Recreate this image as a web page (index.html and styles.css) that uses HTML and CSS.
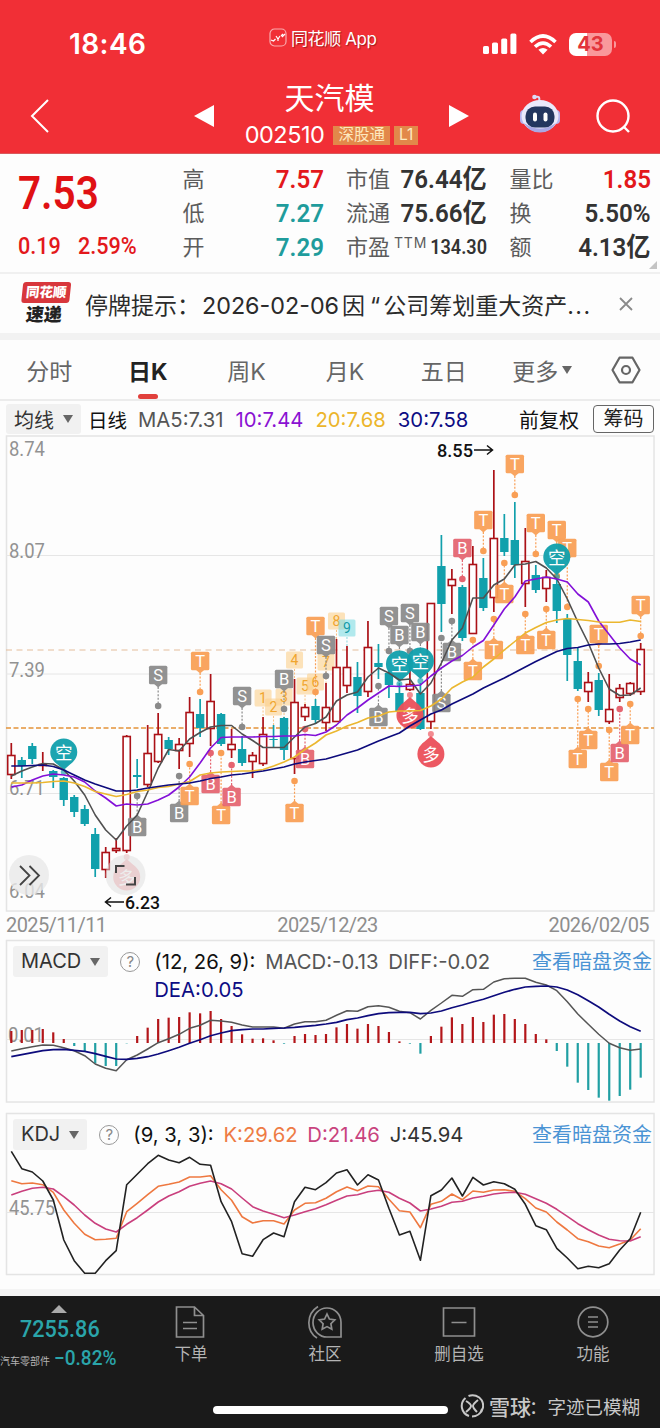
FILE: index.html
```html
<!DOCTYPE html>
<html lang="zh-CN">

<head>
  <meta charset="UTF-8">
  <meta name="viewport" content="width=device-width, initial-scale=1.0">
  <title>天汽模 002510</title>
  <link rel="stylesheet" href="styles.css">
</head>

<body>
  <header class="top">
    <div class="status-bar">
      <div class="clock">18:46</div>
      <div class="app-name">
        <svg width="18" height="19" viewBox="0 0 18 19" fill="none" stroke="#fff" stroke-width="1.2">
          <rect x="1" y="1" width="16" height="17" rx="4.5" stroke-opacity=".6" />
          <path d="M2 12l2.5 1 2-2M7 8l2 3 2-3M9 11v2M12 8l2-2M13 9l3-3" />
        </svg>
        <span>同花顺 App</span>
      </div>
      <div class="signals">
        <svg width="34" height="22" viewBox="0 0 34 22" fill="#fff">
          <rect x="0" y="13" width="6" height="8" rx="1.6" />
          <rect x="9" y="9.5" width="6" height="11.5" rx="1.6" />
          <rect x="18.2" y="5.5" width="6" height="15.5" rx="1.6" />
          <rect x="27.4" y="0.5" width="6" height="20.5" rx="1.6" />
        </svg>
        <svg width="28" height="21" viewBox="0 0 28 21" fill="none" stroke="#fff" stroke-width="3.6">
          <path d="M1.5 8Q14-4 26.500 8" />
          <path d="M6 12.800Q14 5.400 22 12.800" />
          <path d="M14 20.500l-4.600-4.700Q14 12 18.600 15.800z" fill="#fff" stroke="none" />
        </svg>
        <div class="battery"><span>43</span></div>
      </div>
    </div>
    <div class="nav">
      <svg class="back" width="20" height="36" viewBox="0 0 20 36" fill="none" stroke="#fff" stroke-width="2">
        <path d="M18 2L2 18l16 16" />
      </svg>
      <div class="stock">
        <svg width="20" height="22" viewBox="0 0 20 22"><path d="M20 0v22L0 11z" fill="#fff" /></svg>
        <div class="stock-title">
          <div class="stock-name">天汽模</div>
          <div class="stock-code"><span>002510</span><i>深股通</i><i>L1</i></div>
        </div>
        <svg width="20" height="22" viewBox="0 0 20 22"><path d="M0 0v22L20 11z" fill="#fff" /></svg>
      </div>
      <svg class="robot" width="42" height="40" viewBox="0 0 42 40">
        <path d="M20 8c1-5 0-6-4-5" fill="none" stroke="#dcd9f5" stroke-width="2" />
        <circle cx="15.500" cy="3" r="2.300" fill="#dcd9f5" />
        <rect x="1" y="16" width="8" height="14" rx="4" fill="#b6b4ee" />
        <rect x="33" y="16" width="8" height="14" rx="4" fill="#b6b4ee" />
        <ellipse cx="21" cy="22" rx="18.500" ry="16" fill="#eae9fb" />
        <path d="M5 29q16 11 32 0-5 9.500-16 9.500T5 29z" fill="#a9a8e4" />
        <rect x="6.500" y="12.500" width="29" height="21" rx="9.500" fill="#23365f" />
        <rect x="14" y="18.500" width="4" height="9" rx="2" fill="#fff" />
        <rect x="24.500" y="18.500" width="4" height="9" rx="2" fill="#fff" />
      </svg>
      <svg class="search" width="34" height="36" viewBox="0 0 34 36" fill="none" stroke="#fff" stroke-width="2.4">
        <circle cx="17" cy="17" r="15.500" />
        <path d="M27.500 27.500l5.500 5.500" />
      </svg>
    </div>
  </header>

  <section class="quote">
    <div class="price">
      <div class="price-now din">7.53</div>
      <div class="price-change"><span class="din">0.19</span><span class="din">2.59%</span></div>
    </div>
    <dl class="stats">
      <div><dt>高</dt><dd class="din up">7.57</dd></div>
      <div><dt>低</dt><dd class="din down">7.27</dd></div>
      <div><dt>开</dt><dd class="din down">7.29</dd></div>
    </dl>
    <dl class="stats">
      <div><dt>市值</dt><dd class="din">76.44亿</dd></div>
      <div><dt>流通</dt><dd class="din">75.66亿</dd></div>
      <div><dt>市盈<sup>TTM</sup></dt><dd class="din small">134.30</dd></div>
    </dl>
    <dl class="stats">
      <div><dt>量比</dt><dd class="din up">1.85</dd></div>
      <div><dt>换</dt><dd class="din">5.50%</dd></div>
      <div><dt>额</dt><dd class="din">4.13亿</dd></div>
    </dl>
    <span class="corner"></span>
  </section>

  <section class="news">
    <div class="news-logo"><b>同花顺</b><em>速递</em></div>
    <div class="news-text">停牌提示：<span class="date">2026-02-06</span>因<q>“</q>公司筹划重大资产<span class="more">...</span></div>
    <svg width="14" height="14" viewBox="0 0 14 14" stroke="#8a8a8a" stroke-width="1.8"><path d="M1 1l12 12M13 1L1 13" /></svg>
  </section>

  <nav class="tabs">
    <div>分时</div>
    <div class="active">日K</div>
    <div>周K</div>
    <div>月K</div>
    <div>五日</div>
    <div>更多<i class="caret"></i></div>
    <div>
      <svg width="30" height="28" viewBox="0 0 30 28" fill="none" stroke="#666" stroke-width="2.2">
        <path d="M8.500 1.700h13L28.500 14l-7 12.300h-13L1.500 14z" stroke-linejoin="round" />
        <circle cx="15" cy="14" r="4" />
      </svg>
    </div>
  </nav>

  <div class="ma-bar">
    <div class="picker">均线<i class="caret"></i></div>
    <span class="ma-name">日线</span>
    <span class="ma5">MA5:7.31</span>
    <span class="ma10">10:7.44</span>
    <span class="ma20">20:7.68</span>
    <span class="ma30">30:7.58</span>
    <span class="adjust">前复权</span>
    <span class="chips">筹码</span>
  </div>

  <svg id="kline" class="chart" width="660" height="477" viewBox="0 435 660 477"></svg>
  <div class="dates"><span>2025/11/11</span><span>2025/12/23</span><span>2026/02/05</span></div>

  <section class="panel">
    <div class="panel-head">
      <div class="picker">MACD<i class="caret"></i></div>
      <span class="help">?</span>
      <p class="macd-values">
        <span class="black">(12, 26, 9):</span> <span>MACD:-0.13</span> <span>DIFF:-0.02</span> <span class="ma30">DEA:0.05</span>
      </p>
      <a>查看暗盘资金</a>
    </div>
    <svg id="macd" class="chart" width="660" height="163" viewBox="0 940 660 163"></svg>
  </section>

  <section class="panel">
    <div class="panel-head">
      <div class="picker">KDJ<i class="caret"></i></div>
      <span class="help">?</span>
      <p class="kdj-values">
        <span class="black">(9, 3, 3):</span> <span class="k">K:29.62</span> <span class="d">D:21.46</span> <span class="j">J:45.94</span>
      </p>
      <a>查看暗盘资金</a>
    </div>
    <svg id="kdj" class="chart" width="660" height="163" viewBox="0 1113 660 163"></svg>
  </section>

  <footer class="bottom">
    <div class="index">
      <i class="caret-up"></i>
      <div class="din index-value">7255.86</div>
      <div class="index-change"><small>汽车零部件</small><span class="din">−0.82%</span></div>
    </div>
    <div class="item">
      <svg width="34" height="34" viewBox="0 0 34 34"><path d="M2.500 2h18l9 8.500V32h-27zM20.500 2v8.500h9M9 17.500h14M9 23.500h14" /></svg>
      下单
    </div>
    <div class="item">
      <svg width="34" height="34" viewBox="0 0 34 34">
        <path d="M33 32H19.500a14 14.500 0 1 1 13.500-14.500zM10 1.500C-2 9-2 26 9 33" />
        <path d="M19 9l2.400 5 5.400.8-3.900 3.900.9 5.500-4.800-2.600-4.800 2.600.9-5.500-3.900-3.900 5.400-.8z" />
      </svg>
      社区
    </div>
    <div class="item">
      <svg width="34" height="34" viewBox="0 0 34 34"><path d="M1.500 3h31v28h-31zM9.500 17.500h15" /></svg>
      删自选
    </div>
    <div class="item">
      <svg width="34" height="34" viewBox="0 0 34 34"><circle cx="17" cy="17" r="14.800" /><path d="M12 12h10M12 17h10M12 22h10" /></svg>
      功能
    </div>
    <span class="home-bar"></span>
    <div class="watermark">
      <svg width="24" height="24" viewBox="0 0 24 24" fill="none" stroke="#c8c8c8" stroke-width="2">
        <path d="M9 22A10.500 10.500 0 0 1 5.500 4M8.500 2A10.500 10.500 0 0 1 19 20M22 15A10.500 10.500 0 0 1 12 22.500" />
        <path d="M6 7q5 3 5 5t-5 6M18 6q-5 4-5 6t4 6" />
      </svg>
      <b>雪球</b><span>：字迹已模糊</span>
    </div>
  </footer>

  <script src="chart.js"></script>
</body>

</html>
```

FILE: styles.css
```css
* {
  margin: 0;
  padding: 0;
  box-sizing: border-box;
}

body {
  width: 660px;
  font-family: 'Inter', 'Noto Sans CJK SC', sans-serif;
  background: #fdfdfd;
  color: #333;
  overflow-x: hidden;
}

i, em {
  font-style: normal;
}

svg {
  display: block;
  flex: none;
}

.din {
  font-family: 'Roboto', 'Noto Sans CJK SC', sans-serif;
  font-weight: 600;
  display: inline-block;
  transform: scaleX(.89);
  transform-origin: left;
  white-space: nowrap;
}

.up {
  color: #e3181b;
}

.down {
  color: #1f9c9c;
}

/* header */
.top {
  height: 154px;
  background: #f12f36;
  border-bottom: 1px solid #d9595c;
  color: #fff;
}

.status-bar {
  height: 74px;
  padding: 14px 45px 0 69px;
  display: grid;
  grid-template-columns: 190px 1fr 132px;
  align-items: center;
}

.clock {
  font-size: 28px;
  font-weight: 600;
  letter-spacing: .4px;
}

.app-name {
  display: flex;
  align-items: center;
  gap: 4px;
  padding: 0 0 14px 10px;
  font-size: 17px;
  letter-spacing: -.4px;
  text-shadow: 1px 1px 1px rgba(90, 0, 0, .5);
}

.signals {
  display: flex;
  align-items: center;
  gap: 12px;
}

.battery {
  position: relative;
  width: 43px;
  height: 23px;
  border-radius: 7px;
  background: linear-gradient(90deg, #fff 43%, #f9989b 43%);
  color: #e2343b;
  font-size: 20px;
  font-weight: 700;
  line-height: 23px;
  text-align: center;
}

.battery::after {
  content: '';
  position: absolute;
  right: -4px;
  top: 8px;
  width: 2px;
  height: 7px;
  border-radius: 0 2px 2px 0;
  background: #f9989b;
}

.nav {
  height: 79px;
  padding: 0 30px;
  display: flex;
  align-items: center;
}

.back {
  margin-top: 5px;
}

.stock {
  margin-left: 144px;
  width: 275px;
  display: flex;
  justify-content: space-between;
  align-items: center;
}

.stock > svg {
  margin-top: 5px;
}

.stock-title {
  text-align: center;
}

.stock-name {
  font-size: 30px;
  line-height: 38px;
  margin: 5px 4px 0 0;
}

.stock-code {
  display: flex;
  align-items: center;
  gap: 4px;
  font-size: 23.500px;
  line-height: 36px;
  letter-spacing: -.5px;
}

.stock-code span {
  margin-right: 5px;
}

.stock-code i {
  height: 19px;
  padding: 0 5px;
  background: #e2884a;
  color: #fde9c0;
  font-size: 15.500px;
  line-height: 18px;
  letter-spacing: 0;
}

.robot {
  margin: 1px 35px 0 50px;
}

.search {
  margin-top: 6px;
}

/* quote */
.quote {
  position: relative;
  height: 118px;
  padding: 8px 9px 0 18px;
  display: grid;
  grid-template-columns: 142px 141px 141px 141px;
  column-gap: 22.500px;
}

.price {
  color: #e3181b;
  padding-top: 3px;
}

.price-now {
  font-size: 47px;
  line-height: 56px;
  color: #e01114;
  transform: scaleX(.86);
}

.price-change {
  display: flex;
  gap: 13px;
  font-size: 23.500px;
  line-height: 30px;
  margin-top: 10px;
}

.price-change .din {
  font-weight: 500;
  transform: scaleX(.92);
}

.stats div {
  display: flex;
  justify-content: space-between;
  height: 34px;
  line-height: 34px;
}

.stats dt {
  color: #5c5c5c;
  font-size: 22px;
  white-space: nowrap;
}

.stats dd {
  font-size: 26.500px;
  transform: scaleX(.91);
  transform-origin: right;
  margin-left: -20px;
}

.stats dd.small {
  font-size: 21px;
  transform: scaleX(.86);
}

.stats sup {
  font-size: 14px;
  line-height: 0;
  vertical-align: 7px;
  padding-left: 4px;
  letter-spacing: .8px;
}

.corner {
  position: absolute;
  right: 3px;
  bottom: 3px;
  border: 4px solid #c4c4c4;
  border-top-color: transparent;
  border-left-color: transparent;
}

/* news */
.news {
  height: 68px;
  border-top: 2px solid #f0f0f0;
  border-bottom: 7px solid #f2f2f2;
  padding: 0 27px 0 21px;
  display: flex;
  align-items: center;
}

.news-logo {
  width: 48px;
  margin-right: 16px;
  transform: skewX(-6deg);
  text-align: center;
}

.news-logo b {
  display: block;
  height: 21px;
  border-radius: 3px;
  background: #d8373c;
  color: #fff;
  font-size: 13.500px;
  font-weight: 900;
  line-height: 20px;
}

.news-logo em {
  display: block;
  color: #222;
  font-size: 18px;
  font-weight: 900;
  line-height: 23px;
}

.news-text {
  flex: 1;
  font-size: 23px;
  white-space: nowrap;
  color: #2b2b2b;
}

.news-text .date {
  font-size: 23.300px;
  margin: 0 3px 0 2px;
}

.news-text .more {
  letter-spacing: 1.500px;
}

.news-text q {
  quotes: none;
  padding: 0 3px 0 5px;
}

/* tabs */
.tabs {
  height: 61px;
  border-bottom: 2px solid #ececec;
  display: grid;
  grid-template-columns: repeat(6, 98.600px) 1fr;
  align-items: center;
  justify-items: center;
  color: #666;
  font-size: 23px;
}

.tabs div {
  display: flex;
  align-items: center;
  height: 59px;
}

.tabs .active {
  position: relative;
  color: #222;
  font-weight: 700;
}

.tabs .active::after {
  content: '';
  position: absolute;
  left: 50%;
  bottom: 0;
  width: 20px;
  height: 5px;
  margin-left: -10px;
  border-radius: 3px;
  background: #e1403c;
}

.caret {
  border: 5.500px solid transparent;
  border-top: 8px solid #666;
  border-bottom: 0;
}

.tabs .caret {
  margin-left: 4px;
}

.picker {
  display: flex;
  align-items: center;
  gap: 9px;
  height: 31px;
  padding: 0 8px;
  border-radius: 3px;
  background: #f1f1f1;
  color: #333;
  font-size: 20px;
}

/* moving averages */
.ma-bar {
  height: 34px;
  padding: 2px 6px 0 6px;
  display: flex;
  align-items: center;
  font-size: 20.300px;
  white-space: nowrap;
}

.ma-bar .picker {
  margin-right: 7px;
  height: 30px;
}

.ma-name {
  color: #111;
  font-size: 19.500px;
  margin-right: 11px;
}

.ma5 {
  color: #555;
  margin-right: 12px;
}

.ma10 {
  color: #8a12d2;
  margin-right: 12px;
}

.ma20 {
  color: #ecb52b;
  margin-right: 12px;
}

.ma30 {
  color: #0c0c84;
}

.adjust {
  margin: 0 14px 0 auto;
  color: #111;
  font-size: 20px;
}

.chips {
  width: 61px;
  height: 28px;
  border: 1px solid #666;
  border-radius: 4px;
  color: #222;
  font-size: 20px;
  line-height: 26px;
  text-align: center;
}

.chart {
  overflow: visible;
}

.chart text {
  font-family: 'Roboto', 'Noto Sans CJK SC', sans-serif;
}

.dates {
  height: 28px;
  padding: 0 11px 0 6px;
  display: flex;
  justify-content: space-between;
  font-family: 'Roboto', sans-serif;
  font-size: 20px;
  line-height: 27px;
  letter-spacing: -.6px;
  color: #8e8e8e;
}

/* indicators */
.panel {
  position: relative;
  height: 173px;
}

.panel-head {
  position: absolute;
  left: 13px;
  right: 8px;
  top: 6px;
  display: flex;
  align-items: flex-start;
  line-height: 31px;
}

.help {
  width: 20px;
  height: 20px;
  margin: 6px 14px 0 12px;
  border: 1.500px solid #999;
  border-radius: 50%;
  color: #888;
  font-size: 15px;
  line-height: 17px;
  text-align: center;
}

.panel-head p {
  font-size: 20.300px;
  line-height: 28px;
  padding-top: 2px;
  color: #555;
}

.panel-head p span {
  margin-right: 4px;
}

.macd-values {
  width: 366px;
}

.panel-head a {
  margin-left: auto;
  padding-top: 1px;
  color: #4a93d4;
  font-size: 20px;
}

.black {
  color: #111;
}

.panel .k {
  color: #ee7b44;
}

.panel .d {
  color: #c9437e;
}

.panel .j {
  color: #333;
}

/* footer */
.bottom {
  position: relative;
  height: 132px;
  margin-top: 10px;
  background: #1a1a1a;
  box-shadow: 0 -7px #f4f4f4, 0 2px #1a1a1a;
  color: #b4b4b4;
  display: grid;
  grid-template-columns: 124px repeat(4, 134px);
}

.index {
  padding-top: 9px;
}

.caret-up {
  display: block;
  width: 0;
  margin: 0 0 0 51px;
  border: 8px solid transparent;
  border-bottom: 8px solid #aaa;
  border-top: 0;
}

.bottom .din {
  color: #2aa5aa;
  font-weight: 500;
}

.index .index-value {
  margin-left: 20px;
  font-size: 24px;
  line-height: 32px;
  transform: scaleX(.9);
}

.index-change {
  display: flex;
  align-items: center;
  gap: 4px;
  font-size: 20.500px;
  line-height: 21px;
}

.index-change .din {
  transform: scaleX(.93);
}

.index-change small {
  font-size: 10px;
  padding-top: 6px;
  white-space: nowrap;
}

.item {
  display: flex;
  flex-direction: column;
  align-items: center;
  padding-top: 9px;
  font-size: 16.500px;
  line-height: 30px;
}

.item svg {
  fill: none;
  stroke: #8f8f8f;
  stroke-width: 1.7;
}

.home-bar {
  position: absolute;
  left: 213px;
  top: 110px;
  width: 235px;
  height: 8px;
  border-radius: 4px;
  background: #fff;
}

.watermark {
  position: absolute;
  left: 460px;
  top: 96px;
  height: 28px;
  display: flex;
  align-items: center;
  font-size: 18.500px;
  color: #c8c8c8;
  white-space: nowrap;
}

.watermark b {
  margin-left: 5px;
  font-size: 21px;
  font-weight: 500;
}

.watermark span {
  margin-left: -2px;
}
```

FILE: chart.js
```js
const RED = '#ab1117', TEAL = '#11a0ac', ORANGE = '#f99f55', GRAY = '#8a8a8a', PINK = '#e56470';
const X = i => 11.3 + i * 10.49;

// high, low, body top, body bottom, 1 = rise
const candles = [
  [743, 779, 755, 775, 1], [757, 778, 760, 766, 0], [743, 764, 746, 759, 0], [752, 771, 764, 766, 1],
  [770, 788, 771, 777, 0], [777, 806, 778, 800, 0], [795, 817, 797, 812, 0], [805, 826, 809, 824, 0],
  [828, 877, 834, 869, 0], [847, 878, 852, 870, 1], [838, 853, 848, 851, 1], [735, 853, 736, 851, 1],
  [759, 788, 775, 777, 0], [725, 787, 753, 785, 1], [713, 763, 734, 762, 1], [737, 755, 740, 749, 0],
  [738, 769, 744, 751, 1], [697, 757, 712, 744, 1], [699, 737, 714, 728, 0], [674, 746, 701, 729, 1],
  [713, 746, 714, 744, 0], [729, 758, 744, 750, 1], [736, 766, 749, 763, 0], [752, 778, 755, 762, 1],
  [717, 766, 734, 764, 1], [725, 747, 739, 740, 0], [717, 760, 718, 750, 0], [679, 774, 702, 759, 1],
  [704, 721, 707, 717, 1], [699, 724, 706, 720, 0], [683, 731, 707, 723, 1], [639, 722, 667, 722, 1],
  [646, 693, 667, 686, 1], [662, 713, 677, 696, 0], [621, 697, 647, 692, 1], [644, 679, 663, 667, 0],
  [670, 698, 673, 685, 0], [683, 718, 693, 711, 0], [658, 691, 684, 690, 1], [683, 730, 693, 729, 0],
  [603, 729, 603, 722, 1], [535, 632, 566, 604, 0], [569, 614, 579, 586, 1], [585, 641, 587, 638, 0],
  [546, 634, 564, 634, 1], [558, 611, 578, 608, 0], [470, 612, 538, 598, 1], [514, 556, 538, 552, 0],
  [502, 578, 540, 565, 0], [528, 607, 561, 584, 1], [565, 593, 575, 590, 0], [570, 602, 577, 589, 1],
  [575, 623, 584, 611, 0], [614, 681, 619, 655, 0], [647, 691, 661, 689, 0], [672, 702, 682, 692, 1],
  [673, 716, 680, 710, 0], [674, 724, 709, 722, 1], [684, 702, 688, 698, 1], [682, 696, 683, 694, 1],
  [643, 695, 649, 692, 1]
];

const ma5 = [776, 771, 767, 763.5, 764, 770, 781, 795, 815, 830, 840, 826, 815, 792, 768, 749.5, 751, 739, 732.5, 727, 725.5, 725.5, 734, 740.5, 747.5, 747.5, 747.5, 737, 727, 723.5, 717, 701, 695, 692, 677, 668, 673, 680, 679, 694, 683, 663, 640, 628, 598, 598, 585, 579, 565, 564, 561.5, 568, 579, 599, 622, 643, 668, 689, 695.5, 695, 688];
const ma10 = [787, 785, 780, 776, 774, 775, 777, 782, 791, 798, 806, 804, 805, 804, 800, 795, 787, 777, 763, 748, 737.5, 737, 737, 737, 736.5, 736.5, 736, 736, 734.5, 735.5, 732, 725, 715, 708, 700, 693, 686, 686.5, 686, 685, 676, 668, 661, 655.5, 647, 640.5, 625, 609, 597, 581, 579, 577, 579, 582, 594, 602, 621, 634.5, 648, 659, 665];
const ma20 = [783, 783, 783, 782.5, 781.5, 781, 783, 786.5, 791.5, 794, 796.5, 794.5, 791.5, 790, 787.5, 786.5, 784, 781.5, 775, 773, 772, 771.5, 771, 771, 769.5, 766, 762, 757, 749.5, 743, 735, 731, 726, 722.5, 718, 716, 712, 711, 711, 710.5, 706, 699, 688, 682, 677, 667, 659, 650, 641.5, 633, 627.5, 622.5, 620, 618.5, 619.5, 620.5, 622, 622.3, 622.3, 620, 621.5];
const ma30 = [766, 766, 765.5, 765, 766.5, 770, 775, 780, 784, 787.5, 791, 791, 790, 788, 786.5, 785, 784, 783, 781, 778.5, 777, 775, 774, 772.5, 771, 769, 767, 764, 762, 760.5, 759, 756, 753, 750, 745.5, 741, 737, 733, 726, 720, 714, 710, 704, 699, 694, 688, 683, 678, 672.5, 667, 661.5, 656.5, 651.5, 648.5, 647.5, 645, 644, 644, 643.5, 642, 640];

// candle index, text, colour, label y, dot y
const marks = [
  [14, 'S', GRAY, 675, 706], [18, 'T', ORANGE, 661, 692], [22, 'S', GRAY, 696, 727],
  [12, 'B', GRAY, 827, 796], [16, 'B', GRAY, 813, 776], [17, 'T', ORANGE, 796, 764],
  [20, 'T', ORANGE, 815, 753], [19, 'B', PINK, 784, 753], [21, 'B', PINK, 797, 765],
  [27, 'T', ORANGE, 813, 781], [28, 'B', PINK, 759, 729], [26, 'B', GRAY, 679, 709],
  [29, 'T', ORANGE, 626, 692], [30, 'S', GRAY, 645, 676], [35, 'B', GRAY, 717, 686],
  [36, 'S', GRAY, 616, 651], [37, 'B', GRAY, 635, 662], [38, 'S', GRAY, 613, 651], [39, 'B', GRAY, 632, 662],
  [41, 'S', GRAY, 703, 638], [42, 'B', GRAY, 652, 621], [44, 'T', ORANGE, 671, 640],
  [46, 'T', ORANGE, 650, 619], [43, 'B', PINK, 548, 579], [45, 'T', ORANGE, 520, 551],
  [47, 'T', ORANGE, 594, 563], [48, 'T', ORANGE, 464, 495], [50, 'T', ORANGE, 523, 554],
  [52, 'T', ORANGE, 530, 576], [53, 'T', ORANGE, 548, 607], [49, 'T', ORANGE, 645, 614],
  [51, 'T', ORANGE, 640, 609], [56, 'T', ORANGE, 634, 666], [54, 'T', ORANGE, 759, 699],
  [55, 'T', ORANGE, 740, 709], [57, 'T', ORANGE, 772, 730], [58, 'B', PINK, 753, 709],
  [59, 'T', ORANGE, 735, 704], [60, 'T', ORANGE, 605, 636]
];
const counts = [[24, 698], [25, 707], [26, 697], [27, 660], [28, 686], [29, 682], [30, 662], [31, 621], [32, 628]];
const pins = [[5, '空', 752], [37, '空', 664], [39, '空', 661], [52, '空', 557], [11, '多', 877], [38, '多', 715], [40, '多', 754]];

function line(data, y, color, w = 1.6) {
  const pts = data.map((v, i) => X(i).toFixed(1) + ',' + y(v).toFixed(1)).join(' ');
  return `<polyline points="${pts}" fill="none" stroke="${color}" stroke-width="${w}" stroke-linejoin="round"/>`;
}

function rule(y, color = '#e6e6e6', extra = '') {
  return `<path d="M6 ${y}H654" stroke="${color}" ${extra}/>`;
}

function frame(y, h) {
  return `<rect x="6.5" y="${y}" width="647.5" height="${h}" fill="none" stroke="#e4e4e4" stroke-width="1.5"/>`;
}

function label(x, y, text, w, color = '#929292', size = 19.5, weight = 400) {
  return `<text x="${x}" y="${y}" font-size="${size}" font-weight="${weight}" fill="${color}" textLength="${w}" lengthAdjust="spacingAndGlyphs">${text}</text>`;
}

function candle([hi, lo, top, bottom, rise], i) {
  const x = X(i), c = rise ? RED : TEAL;
  if (!rise) {
    return `<path d="M${x} ${hi}V${lo}" stroke="${c}" stroke-width="1.7"/><rect x="${x - 4.2}" y="${top}" width="8.4" height="${bottom - top}" fill="${c}"/>`;
  }
  return `<path d="M${x} ${hi}V${top}M${x} ${bottom}V${lo}" stroke="${c}" stroke-width="1.7"/>` +
    `<rect x="${x - 3.6}" y="${top + .5}" width="7.2" height="${Math.max(bottom - top - 1, 1)}" fill="#fff" stroke="${c}" stroke-width="1.6"/>`;
}

function mark([i, t, c, y, dot]) {
  const x = X(i), s = dot > y ? 1 : -1;
  return `<path d="M${x} ${y + s * 12}V${dot}" stroke="${c}" stroke-width="1.2" stroke-dasharray="2 1.6"/>
    <circle cx="${x}" cy="${dot}" r="3.3" fill="${c}"/>
    <g opacity=".93"><rect x="${x - 9.2}" y="${y - 9.2}" width="18.4" height="18.4" rx="1.5" fill="${c}"/>
    <path d="M${x - 4} ${y + s * 9}h8l-4 ${s * 3.5}z" fill="${c}"/>
    <text x="${x}" y="${y + 5.8}" font-size="16.5" fill="#fff" text-anchor="middle">${t}</text></g>`;
}

function count([i, y], n) {
  const x = X(i), nine = n === 8;
  return `<path d="M${x} ${y + 9}v${nine ? 10 : 14}" stroke="${nine ? '#8bd9df' : '#f8c184'}" stroke-dasharray="2 1.5"/>
    <rect x="${x - 8.5}" y="${y - 8.5}" width="17" height="17" rx="1.5" fill="${nine ? '#7edce2' : '#fbd08c'}" opacity=".6"/>
    <text x="${x}" y="${y + 5}" font-size="14" fill="${nine ? '#159aa5' : '#f0a52e'}" text-anchor="middle">${n + 1}</text>`;
}

function pin([i, t, y]) {
  const x = X(i), up = t === '空', s = up ? 1 : -1, c = up ? TEAL : '#ec505a';
  return `<g opacity="${i === 11 ? .35 : .95}"><circle cx="${x}" cy="${y + s * 20}" r="3" fill="${c}" opacity=".7"/>
    <path d="M${x - 9} ${y + s * 10}L${x} ${y + s * 18}L${x + 9} ${y + s * 10}z" fill="${c}"/>
    <circle cx="${x}" cy="${y}" r="13.5" fill="${c}"/>
    <text x="${x}" y="${y + 6.5}" font-size="17.5" fill="#fff" text-anchor="middle">${t}</text></g>`;
}

const same = v => v;

document.getElementById('kline').innerHTML =
  frame(436, 475) + rule(555.5) + rule(674) + rule(793.5) +
  label(9, 456, '8.74', 36) + label(9, 558, '8.07', 36) + label(9, 677, '7.39', 36) +
  label(9, 795, '6.71', 36) + label(9, 898, '6.04', 36) +
  rule(650, '#e4bd9b', 'stroke-dasharray="6 4.5"') +
  rule(728, '#e39338', 'stroke-width="1.7" stroke-dasharray="5 2.5"') +
  counts.map(count).join('') +
  candles.map(candle).join('') +
  marks.map(mark).join('') + pins.map(pin).join('') +
  line(ma5, same, '#505050') + line(ma10, same, '#8310d8') +
  line(ma20, same, '#ebb72f') + line(ma30, same, '#0d0b7c') +
  label(437, 457, '8.55', 36, '#111', 19, 500) + '<path d="M474 450h18M487 445.500l5.500 4.500-5.500 4.500" stroke="#111" stroke-width="1.5" fill="none"/>' +
  label(125, 908.5, '6.23', 35, '#111', 19, 500) + '<path d="M124 902h-18M111 897.500l-5.500 4.500 5.500 4.500" stroke="#111" stroke-width="1.5" fill="none"/>' +
  `<circle cx="29" cy="875" r="20" fill="#e8e8e8" opacity=".8"/>
  <path d="M20 866l9.500 9.500L20 885M29.500 866l9.500 9.500-9.500 9.500" stroke="#444" stroke-width="1.8" fill="none"/>
  <circle cx="125.5" cy="875" r="20" fill="#ddd" opacity=".5"/>
  <path d="M116 873v-7h8.500M135 877v7.500h-9" stroke="#444" stroke-width="2" fill="none"/>`;

// rows below are kept in thirds of a pixel
const bars = [303, 300, 300, 297, 307, 327, 348, 363, 400, 408, 408, 340, 318, 293, 267, 263, 261, 247, 250, 243, 267, 288, 313, 326, 325, 331, 341, 318, 312, 315, 312, 292, 282, 296, 282, 288, 306, 334, 341, 371, 318, 290, 262, 282, 261, 276, 254, 252, 267, 282, 312, 328, 363, 410, 458, 480, 503, 512, 498, 479, 443];
const diff = [363, 356, 350, 345, 346, 353, 362, 377, 402, 415, 422, 389, 375, 357, 338, 326, 313, 295, 286, 271, 273, 277, 285, 291, 291, 291, 295, 282, 275, 275, 271, 256, 242, 244, 230, 227, 232, 244, 248, 267, 241, 219, 196, 199, 179, 178, 156, 146, 145, 145, 157, 165, 182, 215, 252, 283, 313, 340, 353, 361, 357];
const dea = [380, 374, 368, 362, 359, 358, 361, 364, 371, 379, 387, 388, 385, 380, 372, 362, 352, 340, 329, 317, 309, 302, 299, 297, 297, 295, 294, 292, 289, 286, 282, 277, 269, 264, 257, 251, 248, 247, 247, 251, 249, 243, 233, 225, 216, 208, 197, 187, 178, 171, 169, 168, 171, 180, 194, 212, 231, 253, 273, 290, 304];
const macdY = v => 930 + v / 3;

document.getElementById('macd').innerHTML =
  frame(940.5, 161.5) + rule(1039.5) + label(8, 1042, '0.01', 36) +
  bars.map((v, i) => `<path d="M${X(i)} 1043V${macdY(v)}" stroke="${v < 339 ? '#b3161a' : '#209fa3'}" stroke-width="2.2"/>`).join('') +
  line(diff, macdY, '#555', 1.5) + line(dea, macdY, '#0d0b7c', 1.7);

const j = [139, 191, 201, 228, 285, 405, 467, 505, 505, 467, 437, 239, 208, 176, 151, 165, 173, 157, 178, 181, 290, 350, 446, 454, 404, 384, 395, 290, 247, 254, 233, 204, 194, 240, 209, 225, 310, 390, 379, 466, 272, 255, 219, 273, 217, 240, 230, 236, 253, 298, 362, 374, 430, 459, 491, 484, 488, 476, 435, 401, 322];
const k = [227, 236, 234, 239, 262, 315, 355, 388, 404, 403, 400, 320, 295, 269, 244, 238, 231, 216, 216, 212, 254, 286, 335, 354, 347, 347, 357, 315, 295, 293, 280, 260, 246, 257, 243, 245, 283, 317, 321, 368, 298, 289, 267, 284, 258, 262, 255, 254, 259, 281, 309, 321, 351, 375, 401, 410, 423, 428, 417, 405, 371];
const d = [270, 259, 250, 247, 252, 275, 300, 330, 355, 372, 381, 358, 338, 315, 291, 273, 260, 244, 235, 228, 236, 252, 279, 305, 318, 328, 338, 330, 320, 311, 299, 286, 273, 269, 260, 256, 262, 280, 294, 318, 312, 304, 292, 289, 279, 274, 267, 263, 262, 268, 281, 295, 313, 334, 356, 374, 390, 403, 407, 408, 395];
const kdjY = v => 1105 + v / 3;

document.getElementById('kdj').innerHTML =
  frame(1113.5, 161) + rule(1212.5) + label(9, 1215, '45.75', 46) +
  line(k, kdjY, '#ee7840') + line(d, kdjY, '#c93f7d') + line(j, kdjY, '#222');
```
